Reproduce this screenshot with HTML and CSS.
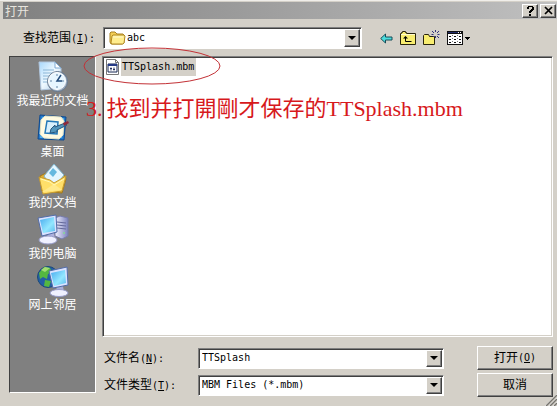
FILE: index.html
```html
<!DOCTYPE html>
<html lang="zh-CN">
<head>
<meta charset="utf-8">
<title>打开</title>
<link rel="stylesheet" href="styles.css">
</head>
<body>
<main class="dialog">
  <header class="titlebar">
    <h1 class="title">打开</h1>
    <button class="caption-btn" type="button" aria-label="帮助"><svg width="9" height="10" viewBox="0 0 9 10" shape-rendering="crispEdges"><path d="M1 1h1v-1h5v1h1v3h-1v1h-1v1h-1v1h-2v-2h1v-1h1v-1h1v-2h-3v2h-2zM3 8h2v2h-2z"/></svg></button>
    <button class="caption-btn" type="button" aria-label="关闭"><svg width="9" height="9" viewBox="0 0 9 9"><path d="M1 1l7 7M8 1l-7 7" stroke="#000" stroke-width="1.7"/></svg></button>
  </header>

  <div class="lookin">
    <label class="lookin-label" for="folder">查找范围<span class="en">(<u>I</u>):</span></label>
    <div class="combo folder-combo">
      <svg class="folder-icon" width="17" height="14" viewBox="0 0 17 14"><path d="M1 11V2l1-1h4l2 2h6l1 1v8l-2 1H2z" fill="#f3ce55" stroke="#a98222"/><path d="M2 12l1-7 1-1h11l1 1-1 7-1 1H3z" fill="#ffed8e" stroke="#b28a26"/><path d="M4 6h10" stroke="#fffbd2"/></svg>
      <select class="field" id="folder"><option>abc</option></select>
      <span class="arrow"></span>
    </div>
    <div class="tools">
      <button class="tool" type="button" aria-label="后退"><svg width="13" height="11" viewBox="0 0 13 11"><path d="M.7 5.500L5.500 1v3h6.500v3H5.500v3z" fill="#4cdddd" stroke="#174d59"/></svg></button>
      <button class="tool" type="button" aria-label="向上一级"><svg width="16" height="14" viewBox="0 0 16 14"><path d="M.5 13.500v-11h1v-1h1v-1h3v1h1v1h9v11z" fill="#f8ed70" stroke="#28240c"/><path d="M1 3.500h14" stroke="#fffbd0"/><path d="M5.500 6v4.500h6" fill="none" stroke="#000"/><path d="M3 7.500L5.500 5 8 7.500z"/></svg></button>
      <button class="tool" type="button" aria-label="新建文件夹"><svg width="17" height="16" viewBox="0 0 17 16"><path d="M.5 14.500v-9l1-1h4l1 2h5v8z" fill="#f8ed70" stroke="#28240c"/><path d="M12.500 0v2M12.500 6v2M8.500 4.500h2M14.500 4.500h2M9 1l2 2M14 6l2 2M16 1l-2 2M11 6l-1 1" stroke="#33337b"/></svg></button>
      <button class="tool views" type="button" aria-label="查看"><svg width="23" height="14" viewBox="0 0 23 14" shape-rendering="crispEdges"><path d="M0 0h16v14H0z" fill="#111"/><path d="M1 3h14v10H1z" fill="#fff"/><path d="M1 1h10v1H1z" fill="#222b68"/><path d="M11 1h1v1h-1zM13 1h1v1h-1z" fill="#fff"/><path d="M2 5h2v1H2zM7 5h2v1H7zM12 5h2v1h-2zM2 8h2v1H2zM7 8h2v1H7zM12 8h2v1h-2zM2 11h2v1H2zM7 11h2v1H7zM12 11h2v1h-2z" fill="#111"/><path d="M5 4h1v1H5zM10 4h1v1h-1zM5 7h1v1H5zM10 7h1v1h-1zM5 10h1v1H5zM10 10h1v1h-1z" fill="#777"/><path d="M18 6h5v1h-1v1h-1v1h-1v-1h-1v-1h-1z"/></svg></button>
    </div>
  </div>

  <div class="content">
    <nav class="places">
      <button class="place" type="button">
        <svg width="32" height="32" viewBox="0 0 32 32"><defs><linearGradient id="paper" x2="1" y2="1"><stop stop-color="#a8d8fc"/><stop offset=".5" stop-color="#eff9ff"/><stop offset="1" stop-color="#a9c9e6"/></linearGradient><linearGradient id="screen" x2="1" y2="1"><stop stop-color="#47a9ee"/><stop offset=".6" stop-color="#93e7ff"/><stop offset="1" stop-color="#5bbaed"/></linearGradient><linearGradient id="tower"><stop stop-color="#f1f2ff"/><stop offset="1" stop-color="#7c82bd"/></linearGradient></defs><path d="M2 1h16l6 6v20l-20 2z" fill="url(#paper)" stroke="#b1c7df"/><path d="M18 1v6h6z" fill="#fff" stroke="#7da9d3"/><path d="M6 9h11M6 12h10M6 15h6M6 18h5M6 21h4" stroke="#8bb6d6"/><circle cx="20.500" cy="20.500" r="10" fill="#a1b2c5" stroke="#65788e"/><circle cx="20" cy="20" r="8.500" fill="#e7f6ff" stroke="#fff"/><path d="M20 13v2M20 25v2M13 20h2M25 20h2" stroke="#6485a5"/><path d="M24 14l-4 6h5" fill="none" stroke="#234c7c" stroke-width="1.500"/></svg>
        <span>我最近的文档</span></button>
      <button class="place" type="button">
        <svg width="32" height="32" viewBox="0 0 32 32"><path d="M3 3l26 2-2 23-26-1z" fill="#247cce" stroke="#0d488e"/><path d="M5 5l22 1-2 20H3z" fill="#54aeea"/><path d="M8 4l16 1 3 4-1 14-4 4-15-1-4-4L4 8z" fill="#fffbe2" stroke="#e4e2c4"/><path d="M10 9l11 1-1 12-12-1z" fill="#d8f0fc" stroke="#2579b8" stroke-width="1.500"/><path d="M14 17l4-4v2l10-4 2 2-10 5v2l-7 1z" fill="#5396bc" stroke="#28587e"/><path d="M26 11l5-2 1 2-5 3z" fill="#8e293a"/></svg>
        <span>桌面</span></button>
      <button class="place" type="button">
        <svg width="32" height="32" viewBox="0 0 32 32"><path d="M3 13l6-3 18 2 2 4-4 14-20-2z" fill="#e1ae32" stroke="#9f781e"/><path d="M17 1l10 11-11 14-9-13z" fill="#e5f6ff" stroke="#7fb4ce"/><path d="M16 5l4 4-4 5-4-4z" fill="#66b8df"/><path d="M2 14l11 3 4 3 12-7-4 15-19 3z" fill="#ffdf69" stroke="#c69b31"/><path d="M5 29l12-8 8 6z" fill="#ffe98b"/><path d="M4 16l9 3 4 3 10-6" fill="none" stroke="#fff7b5"/></svg>
        <span>我的文档</span></button>
      <button class="place" type="button">
        <svg width="32" height="32" viewBox="0 0 32 32"><path d="M18 4l5-2 8 2v18l-6 3-7-3z" fill="url(#tower)" stroke="#777cac"/><path d="M20 8l9 1M20 11l9 1M20 14l9 1" stroke="#656a9b"/><circle cx="27" cy="19" r="1" fill="#84db94"/><path d="M11 18l6 1 1 7-8-1z" fill="#aeb2dd"/><ellipse cx="11" cy="26" rx="9" ry="4" fill="#eff1ff" stroke="#969bc9"/><path d="M1 4l18-3 1 17-15 4z" fill="#d9e2ff" stroke="#526ca8"/><path d="M3 6l14-3 1 14-12 2z" fill="url(#screen)"/></svg>
        <span>我的电脑</span></button>
      <button class="place" type="button">
        <svg width="32" height="32" viewBox="0 0 32 32"><circle cx="11" cy="12" r="10.500" fill="#235ea5" stroke="#1b4979"/><path d="M2 8l5-6 6 1 2 4-4 2-1 5-4-2-3 2zM8 15l6 1-2 6-5-1z" fill="#54b840"/><path d="M4 5l4-3 5 1-5 4z" fill="#a2dd72"/><path d="M20 20l6 1 1 7-8-1z" fill="#a7aed7"/><ellipse cx="22" cy="28" rx="9" ry="3.500" fill="#eff1ff" stroke="#969bc9"/><path d="M12 6l18-4 1 18-15 3z" fill="#d9e2ff" stroke="#526ca8"/><path d="M14 8l14-3 1 13-12 3z" fill="url(#screen)"/></svg>
        <span>网上邻居</span></button>
    </nav>

    <section class="right">
      <div class="files">
        <button class="file" type="button">
          <svg width="13" height="16" viewBox="0 0 13 16"><path d="M.5.5h9l3 3v12H.5z" fill="#fff" stroke="#777"/><path d="M9.500.5v3h3" fill="none" stroke="#777"/><path d="M2 5h9v8H2z" fill="#fff" stroke="#172653"/><path d="M2 5h9v2H2z" fill="#263b87"/><path d="M4 9.500h2M5 8.500v3M7 10.500h2M8 8.500v3" stroke="#25305f"/></svg>
          <span class="en">TTSplash.mbm</span>
        </button>
        <svg class="ring" width="138" height="38" viewBox="0 0 138 38"><ellipse cx="69" cy="19" rx="68" ry="18" fill="none" stroke="#c33136"/></svg>
        <p class="note"><span>3.</span><span>找到并打開剛才保存的TTSplash.mbm</span></p>
      </div>
      <form class="form">
        <label for="filename">文件名<span class="en">(<u>N</u>):</span></label>
        <div class="combo"><input class="field" id="filename" value="TTSplash"><button class="arrow" type="button" aria-label="文件名列表"></button></div>
        <button class="action" type="button">打开<span class="en">(<u>O</u>)</span></button>
        <label for="filetype">文件类型<span class="en">(<u>T</u>):</span></label>
        <div class="combo"><select class="field" id="filetype"><option>MBM Files (*.mbm)</option></select><span class="arrow"></span></div>
        <button class="action" type="button">取消</button>
      </form>
    </section>
  </div>
  <svg class="grip" width="12" height="12" viewBox="0 0 12 12"><path d="M0 12L12 0M4 12l8-8M8 12l4-4" stroke="#fff"/><path d="M1 12L12 1M5 12l7-7M9 12l3-3" stroke="#77756f" stroke-width="1.500"/></svg>
</main>
</body>
</html>
```
FILE: styles.css
```css
* {
  box-sizing: border-box;
}

body {
  margin: 0;
  background: #d4d0c8;
  color: #000;
  font: 12px/16px "DejaVu Sans Mono", "Noto Sans CJK SC", monospace;
}

button, input, select {
  margin: 0;
  padding: 0;
  border: 0;
  border-radius: 0;
  background: none;
  color: inherit;
  font: inherit;
}

svg {
  display: block;
  flex: none;
}

.en {
  font-size: 10px;
}

.dialog {
  position: relative;
  display: flex;
  flex-direction: column;
  min-height: 100vh;
  padding: 1px 0 9px 3px;
  border-top: 1px solid #f0eeea;
  overflow: hidden;
}

.titlebar {
  display: flex;
  align-items: center;
  gap: 2px;
  height: 17px;
  padding: 0 1px 0 2px;
  background: linear-gradient(90deg, #808080, #c0c0c0);
}

.title {
  flex: 1;
  margin: 0;
  color: #e8e5de;
  font: 12px/16px "Noto Sans CJK SC", sans-serif;
}

.caption-btn, .action, .arrow {
  display: flex;
  align-items: center;
  justify-content: center;
  background: #d4d0c8;
  border: 1px solid;
  border-color: #fff #404040 #404040 #fff;
  box-shadow: inset -1px -1px #808080;
}

.caption-btn {
  width: 16px;
  height: 14px;
}

.lookin {
  display: flex;
  align-items: center;
  padding: 8px 0 7px 20px;
}

.lookin-label {
  width: 80px;
}

.combo {
  position: relative;
  display: flex;
  height: 21px;
  padding: 1px;
  background: #fff;
  border: 1px solid;
  border-color: #808080 #fff #fff #808080;
  box-shadow: inset 1px 1px #404040;
}

.folder-combo {
  flex: 1;
  height: 22px;
}

.folder-icon {
  position: absolute;
  left: 5px;
  top: 3px;
}

.field {
  flex: 1;
  min-width: 0;
  padding-left: 2px;
  appearance: none;
  outline: 0;
  font-size: 10px;
}

.folder-combo .field {
  padding-left: 22px;
}

.arrow {
  width: 16px;
  pointer-events: none;
}

.arrow::before {
  content: "";
  border: 4px solid transparent;
  border-top-color: #000;
  border-bottom: 0;
}

.tools {
  display: flex;
  align-items: center;
  gap: 7px;
  width: 195px;
  padding-left: 18px;
}

.content {
  flex: 1;
  display: flex;
  gap: 6px;
  padding: 0 4px 0 6px;
}

.places {
  width: 87px;
  margin-bottom: 4px;
  padding: 4px 0;
  background: #808080;
  border: 1px solid;
  border-color: #404040 #fff #fff #404040;
}

.place {
  display: flex;
  flex-direction: column;
  align-items: center;
  width: 100%;
  height: 51px;
  color: #fff;
  white-space: nowrap;
}

.right {
  flex: 1;
  display: flex;
  flex-direction: column;
  min-width: 0;
}

.files {
  position: relative;
  flex: 1;
  padding: 1px;
  background: #fff;
  border: 1px solid;
  border-color: #808080 #fff #fff #808080;
  box-shadow: inset 1px 1px #404040, inset -1px -1px #d4d0c8;
}

.file {
  display: flex;
  align-items: center;
  gap: 2px;
  height: 18px;
  padding-left: 2px;
}

.file .en {
  padding: 0 2px 0 1px;
  background: #d4d0c8;
  line-height: 18px;
}

.ring {
  position: absolute;
  left: -20px;
  top: -10px;
}

.note {
  position: absolute;
  left: -17px;
  top: 38px;
  display: flex;
  gap: 4px;
  margin: 0;
  color: #d7191c;
  font: 22px/28px "Liberation Serif", "Noto Sans CJK TC", serif;
  white-space: nowrap;
}

.form {
  display: grid;
  grid-template-columns: 96px 1fr 76px;
  gap: 3px 0;
  align-items: center;
  padding-top: 9px;
}

.form label {
  padding-left: 2px;
}

.form .combo {
  margin-right: 33px;
}

.action {
  height: 24px;
}

.grip {
  position: absolute;
  right: 0;
  bottom: 0;
}
```
